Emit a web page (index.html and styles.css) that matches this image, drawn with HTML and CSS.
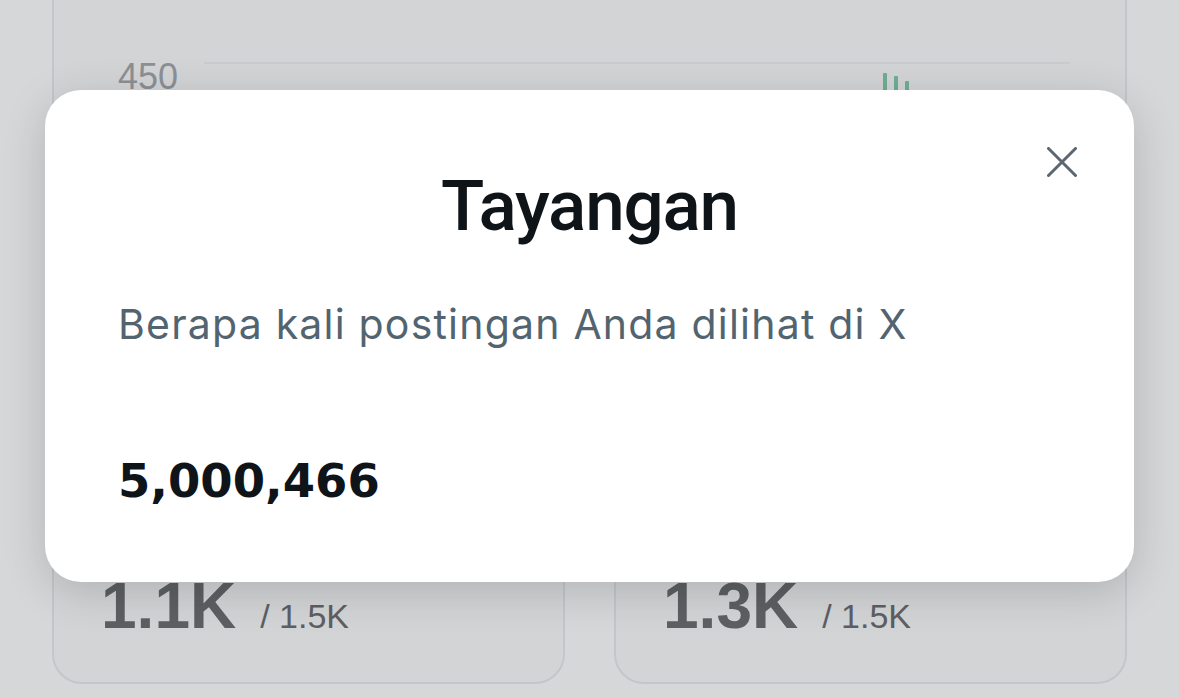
FILE: index.html
```html
<!DOCTYPE html>
<html lang="id">
<head>
<meta charset="utf-8">
<title>Tayangan</title>
<link rel="stylesheet" href="styles.css">
</head>
<body>
<main class="page">
  <section class="chart-card">
    <div class="chart-row">
      <div class="y-axis"><span class="y-label">450</span></div>
      <div class="plot">
        <div class="bars">
          <span class="bar" style="height:24px"></span>
          <span class="bar" style="height:21px"></span>
          <span class="bar" style="height:16px"></span>
        </div>
      </div>
    </div>
  </section>
  <section class="stats">
    <div class="stat-card">
      <span class="stat-value">1.1K</span><span class="stat-total">/ 1.5K</span>
    </div>
    <div class="stat-card">
      <span class="stat-value">1.3K</span><span class="stat-total">/ 1.5K</span>
    </div>
  </section>
</main>

<div class="modal" role="dialog" aria-labelledby="modal-title">
  <button class="close" aria-label="Tutup">
    <svg width="30" height="30" viewBox="0 0 30 30" aria-hidden="true">
      <path d="M1.5 1.5L28.5 28.5M28.5 1.5L1.5 28.5" stroke="#5b6670" stroke-width="3" stroke-linecap="round" fill="none"/>
    </svg>
  </button>
  <h1 id="modal-title" class="modal-title">Tayangan</h1>
  <p class="modal-desc">Berapa kali postingan Anda dilihat di X</p>
  <p class="modal-value">5,000,466</p>
</div>
</body>
</html>
```

FILE: styles.css
```css
* { box-sizing: border-box; }

html, body {
  margin: 0;
  width: 1179px;
  height: 698px;
  overflow: hidden;
}

body {
  background: #d6d7d9;
  font-family: "Liberation Sans", Arial, sans-serif;
  position: relative;
}

.page {
  padding: 0 52px;
}

.chart-card {
  margin-top: -40px;
  height: 560px;
  border: 2px solid #c4c7ca;
  border-radius: 34px;
  background: #d3d4d6;
  padding-top: 100px;
}

.chart-row {
  display: flex;
  padding: 0 55px 0 64px;
}

.y-axis {
  width: 86px;
  flex: none;
}

.y-label {
  display: block;
  font-size: 36px;
  line-height: 36px;
  margin-top: -3px;
  color: #8c9095;
}

.plot {
  flex: 1;
  border-top: 2px solid #c9cbce;
  height: 80px;
}

.bars {
  display: flex;
  align-items: flex-start;
  gap: 7px;
  margin-left: 679px;
  margin-top: 9px;
}

.bar {
  width: 4px;
  background: #6fae92;
  border-radius: 1px;
}
.bar:nth-child(2) { margin-top: 3px; }
.bar:nth-child(3) { margin-top: 8px; }

.stats {
  display: grid;
  grid-template-columns: 1fr 1fr;
  gap: 49px;
  margin-top: 13px;
}

.stat-card {
  height: 151px;
  border: 2px solid #c4c7ca;
  border-radius: 30px;
  background: #d3d4d6;
  padding: 39px 0 0 47px;
  display: flex;
  align-items: baseline;
}

.stat-value {
  font-weight: 700;
  font-size: 64px;
  line-height: 64px;
  color: #5d5f63;
}

.stat-total {
  font-size: 34px;
  color: #5d5f63;
  margin-left: 24px;
}

.modal {
  position: absolute;
  left: 45px;
  top: 90px;
  width: 1089px;
  height: 492px;
  background: #ffffff;
  border-radius: 36px;
  box-shadow: 0 10px 44px rgba(0, 0, 0, 0.16);
  padding: 76px 73px 0 73px;
  font-family: Roboto, "Liberation Sans", sans-serif;
}

.close {
  position: absolute;
  top: 50px;
  right: 50px;
  width: 44px;
  height: 44px;
  padding: 0;
  border: 0;
  background: transparent;
  display: flex;
  align-items: center;
  justify-content: center;
}

.modal-title {
  margin: 0;
  text-align: center;
  font-size: 71px;
  line-height: 80px;
  font-weight: 500;
  color: #0f1419;
  letter-spacing: -1.2px;
}

.modal-desc {
  margin: 53px 0 0 0;
  font-family: Inter, Roboto, sans-serif;
  font-size: 41px;
  line-height: 50px;
  letter-spacing: 1.2px;
  color: #536471;
}

.modal-value {
  margin: 102px 0 0 0;
  font-family: "DejaVu Sans", sans-serif;
  font-weight: 700;
  font-size: 46.5px;
  line-height: 60px;
  color: #0f1419;
}
```
